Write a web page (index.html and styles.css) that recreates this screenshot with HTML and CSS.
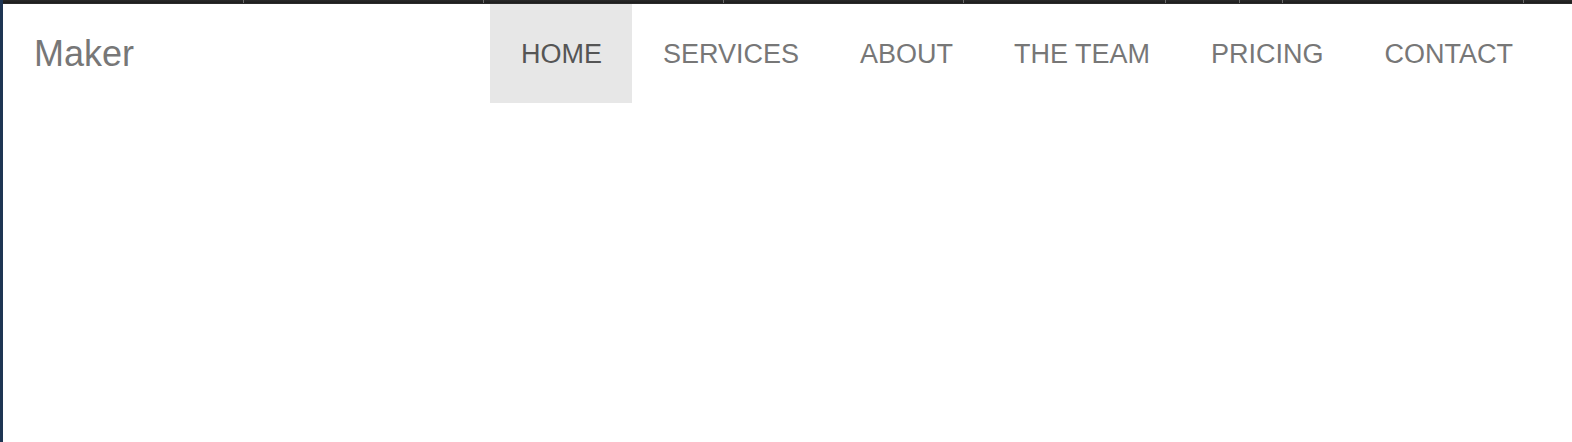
FILE: index.html
```html
<!DOCTYPE html>
<html>
<head>
<meta charset="utf-8">
<link rel="stylesheet" href="styles.css">
</head>
<body>
<div class="frame">
  <div class="topbar">
    <span class="tick t1"></span><span class="tick t2"></span><span class="tick t3"></span>
    <span class="tick t4"></span><span class="tick t5"></span><span class="tick t6"></span>
    <span class="tick t7"></span><span class="tick t8"></span>
  </div>
  <nav class="navbar">
    <a class="brand" href="#">Maker</a>
    <ul class="menu">
      <li><a class="item active" href="#">HOME</a></li>
      <li><a class="item" href="#">SERVICES</a></li>
      <li><a class="item" href="#">ABOUT</a></li>
      <li><a class="item" href="#">THE TEAM</a></li>
      <li><a class="item" href="#">PRICING</a></li>
      <li><a class="item" href="#">CONTACT</a></li>
    </ul>
  </nav>
</div>
</body>
</html>
```
FILE: styles.css
```css
html, body {
  margin: 0;
  padding: 0;
  height: 100%;
  background: #ffffff;
}
body {
  font-family: "Liberation Sans", Arial, Helvetica, sans-serif;
}
.frame {
  min-height: 100%;
  box-sizing: border-box;
  border-left: 3px solid #1e3553;
  background: #ffffff;
}
.topbar {
  position: relative;
  height: 4px;
  background: linear-gradient(#2a2a2a, #1c1c1c 75%, #3a3a3a);
}
.tick {
  position: absolute;
  top: 0;
  width: 1px;
  height: 3px;
  background: #6a6a6a;
}
.t1 { left: 240px; }
.t2 { left: 480px; }
.t3 { left: 720px; }
.t4 { left: 960px; }
.t5 { left: 1162px; }
.t6 { left: 1236px; }
.t7 { left: 1279px; }
.t8 { left: 1520px; }
.navbar {
  display: flex;
  align-items: center;
  justify-content: space-between;
  height: 99px;
  padding: 0 28.5px 0 31px;
}
.brand {
  font-size: 36px;
  color: #777777;
  text-decoration: none;
  line-height: 1;
  margin-top: 0;
}
.menu {
  display: flex;
  list-style: none;
  margin: 0;
  padding: 0;
  height: 100%;
}
.item {
  display: block;
  height: 99px;
  line-height: 100px;
  padding: 0 30.5px;
  font-size: 27px;
  color: #777777;
  text-decoration: none;
}
.item.active {
  background: #e7e7e7;
  color: #555555;
}
```
